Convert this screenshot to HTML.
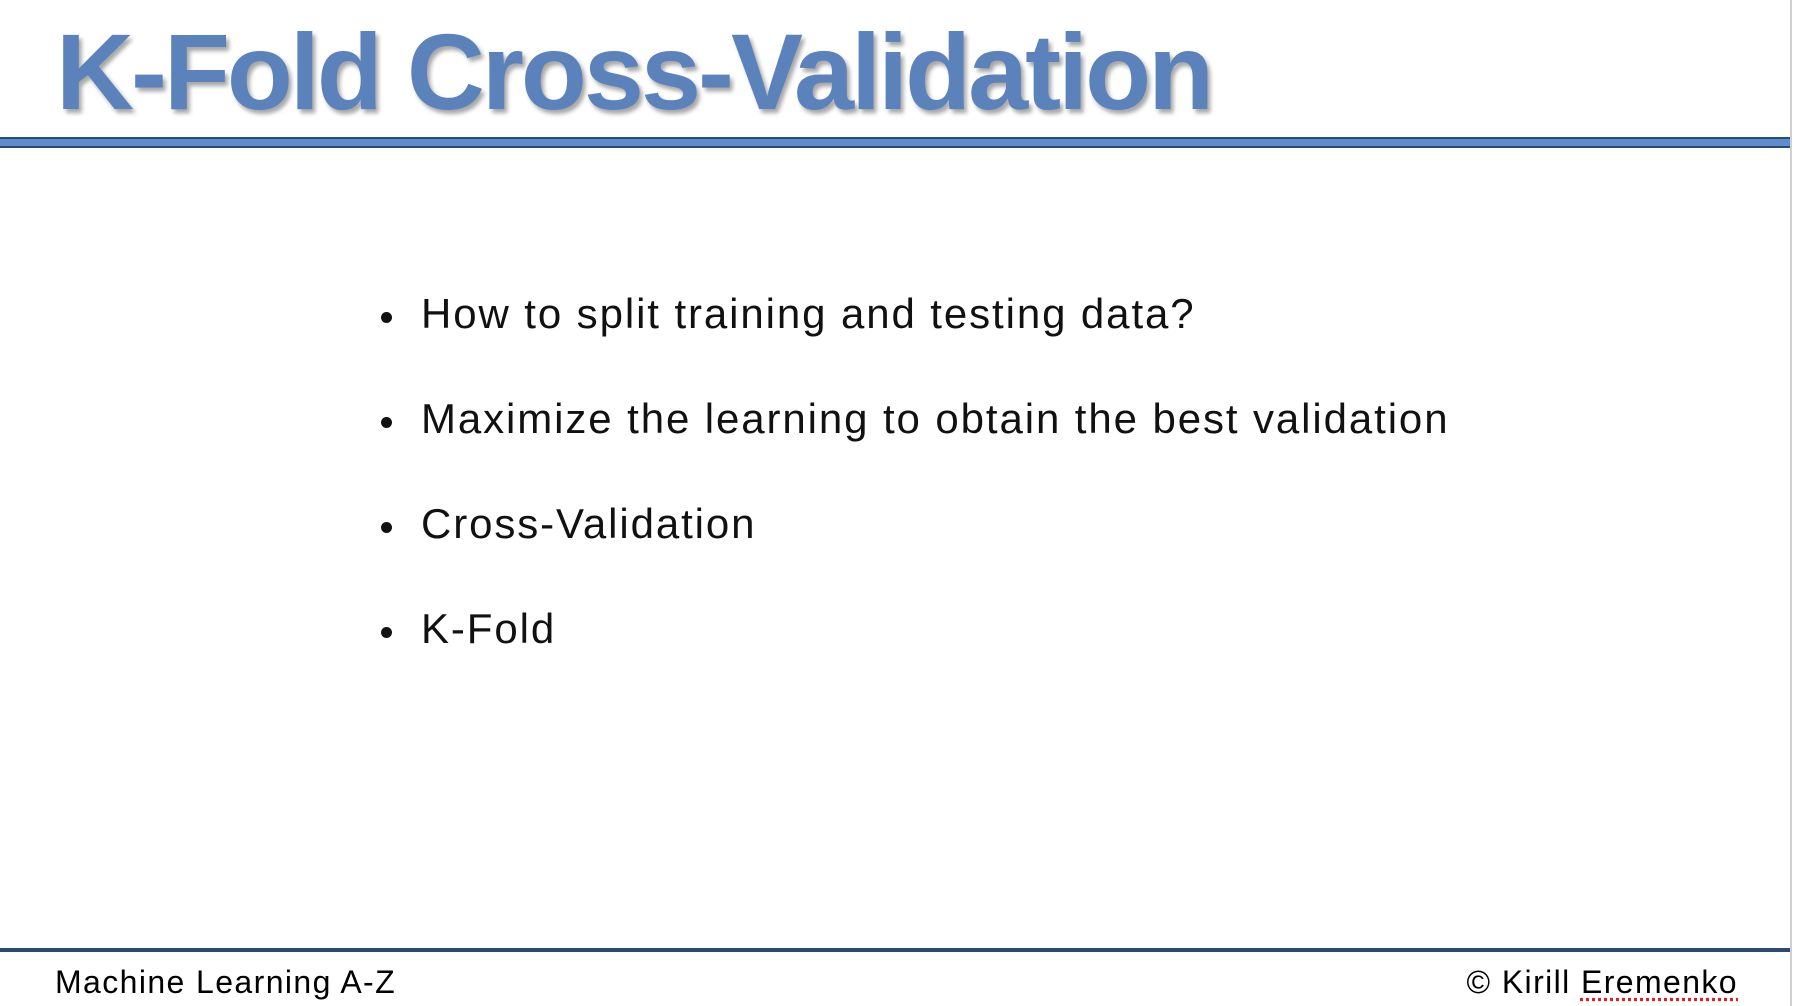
<!DOCTYPE html>
<html><head><meta charset="utf-8"><style>
html,body{margin:0;padding:0;background:#fff;}
body{width:1794px;height:1006px;position:relative;overflow:hidden;font-family:"Liberation Sans",sans-serif;}
.title{position:absolute;left:56px;top:12px;font-size:108px;font-weight:bold;color:#5c82bc;letter-spacing:-3px;text-shadow:3px 4px 4px rgba(0,0,0,0.35);white-space:nowrap;line-height:120px;}
.hl{position:absolute;left:0;top:137px;width:1790px;height:7px;background:#5f8ccc;border-top:2px solid #2c4a78;border-bottom:2px solid #2c4a78;}
.vl{position:absolute;left:1790px;top:0;width:2px;height:1006px;background:#d0d0d0;}
.b{position:absolute;left:421px;font-size:42px;color:#111;white-space:nowrap;line-height:50px;letter-spacing:1.9px;}
.b:before{content:"";position:absolute;left:-40px;top:23px;width:11px;height:11px;border-radius:50%;background:#111;}
.fl{position:absolute;left:0;top:948px;width:1790px;height:4px;background:#2c4a78;}
.f{position:absolute;top:962px;font-size:32px;color:#000;line-height:40px;white-space:nowrap;letter-spacing:1.4px;}
.u{text-decoration:underline dotted #e02020;text-underline-offset:5px;}
</style></head><body>
<div class="title">K-Fold Cross-Validation</div>
<div class="hl"></div>
<div class="vl"></div>
<div class="b" style="top:289px">How to split training and testing data?</div>
<div class="b" style="top:394px">Maximize the learning to obtain the best validation</div>
<div class="b" style="top:499px">Cross-Validation</div>
<div class="b" style="top:604px">K-Fold</div>
<div class="fl"></div>
<div class="f" style="left:55px">Machine Learning A-Z</div>
<div class="f" style="right:56px">© Kirill <span class="u">Eremenko</span></div>
</body></html>
